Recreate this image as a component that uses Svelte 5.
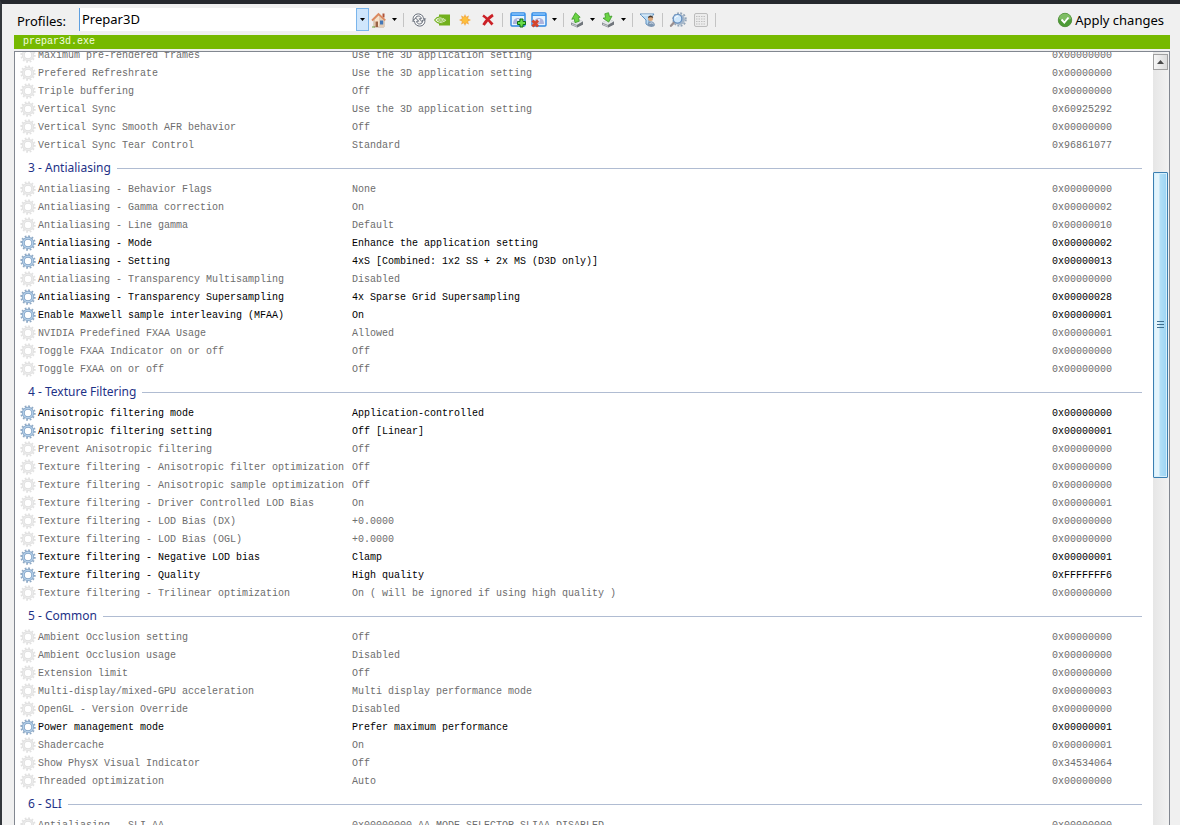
<script>
  const exe = 'prepar3d.exe';
  const APP = 'Use the 3D application setting';

  // [name, value, hex, changed]
  const groups = [
    {
      title: '',
      rows: [
        ['Maximum pre-rendered frames', APP, '0x00000000'],
        ['Prefered Refreshrate', APP, '0x00000000'],
        ['Triple buffering', 'Off', '0x00000000'],
        ['Vertical Sync', APP, '0x60925292'],
        ['Vertical Sync Smooth AFR behavior', 'Off', '0x00000000'],
        ['Vertical Sync Tear Control', 'Standard', '0x96861077']
      ]
    },
    {
      title: '3 - Antialiasing',
      rows: [
        ['Antialiasing - Behavior Flags', 'None', '0x00000000'],
        ['Antialiasing - Gamma correction', 'On', '0x00000002'],
        ['Antialiasing - Line gamma', 'Default', '0x00000010'],
        ['Antialiasing - Mode', 'Enhance the application setting', '0x00000002', true],
        ['Antialiasing - Setting', '4xS [Combined: 1x2 SS + 2x MS (D3D only)]', '0x00000013', true],
        ['Antialiasing - Transparency Multisampling', 'Disabled', '0x00000000'],
        ['Antialiasing - Transparency Supersampling', '4x Sparse Grid Supersampling', '0x00000028', true],
        ['Enable Maxwell sample interleaving (MFAA)', 'On', '0x00000001', true],
        ['NVIDIA Predefined FXAA Usage', 'Allowed', '0x00000001'],
        ['Toggle FXAA Indicator on or off', 'Off', '0x00000000'],
        ['Toggle FXAA on or off', 'Off', '0x00000000']
      ]
    },
    {
      title: '4 - Texture Filtering',
      rows: [
        ['Anisotropic filtering mode', 'Application-controlled', '0x00000000', true],
        ['Anisotropic filtering setting', 'Off [Linear]', '0x00000001', true],
        ['Prevent Anisotropic filtering', 'Off', '0x00000000'],
        ['Texture filtering - Anisotropic filter optimization', 'Off', '0x00000000'],
        ['Texture filtering - Anisotropic sample optimization', 'Off', '0x00000000'],
        ['Texture filtering - Driver Controlled LOD Bias', 'On', '0x00000001'],
        ['Texture filtering - LOD Bias (DX)', '+0.0000', '0x00000000'],
        ['Texture filtering - LOD Bias (OGL)', '+0.0000', '0x00000000'],
        ['Texture filtering - Negative LOD bias', 'Clamp', '0x00000001', true],
        ['Texture filtering - Quality', 'High quality', '0xFFFFFFF6', true],
        ['Texture filtering - Trilinear optimization', 'On ( will be ignored if using high quality )', '0x00000000']
      ]
    },
    {
      title: '5 - Common',
      rows: [
        ['Ambient Occlusion setting', 'Off', '0x00000000'],
        ['Ambient Occlusion usage', 'Disabled', '0x00000000'],
        ['Extension limit', 'Off', '0x00000000'],
        ['Multi-display/mixed-GPU acceleration', 'Multi display performance mode', '0x00000003'],
        ['OpenGL - Version Override', 'Disabled', '0x00000000'],
        ['Power management mode', 'Prefer maximum performance', '0x00000001', true],
        ['Shadercache', 'On', '0x00000001'],
        ['Show PhysX Visual Indicator', 'Off', '0x34534064'],
        ['Threaded optimization', 'Auto', '0x00000000']
      ]
    },
    {
      title: '6 - SLI',
      rows: [['Antialiasing - SLI AA', '0x00000000 AA_MODE_SELECTOR_SLIAA_DISABLED', '0x00000000']]
    }
  ];
</script>

{#snippet caret()}
  <svg width="5" height="3" viewBox="0 0 5 3" aria-hidden="true"><path d="M0 0h5L2.5 3z" fill="#000" /></svg>
{/snippet}

{#snippet gear(on)}
  <svg class="gear" width="16" height="16" viewBox="0 0 16 16" aria-hidden="true">
    <circle cx="8" cy="8" r="6.8" fill="none" stroke={on ? '#8fa9c4' : '#e2e2e2'} stroke-width="1.8" stroke-dasharray="1.8 1.76" />
    <circle cx="8" cy="8" r="4.7" fill="none" stroke={on ? '#7d9fc3' : '#dedede'} stroke-width="2.9" />
    <circle cx="8" cy="8" r="4.7" fill="none" stroke={on ? '#b4cfe8' : '#ebebeb'} stroke-width="1.5" />
  </svg>
{/snippet}

{#snippet profileWindow()}
  <rect x="1" y="1" width="14" height="13" rx="1" fill="#e6f3ff" stroke="#2f86e0" stroke-width="1.4" />
  <path d="M1 1h14v3H1z" fill="#3c96ee" />
  <path d="M2 2h12" stroke="#a9d5ff" stroke-width="1" />
  <path d="M3 12c0-4 2-6 5-6s5 2 5 6z" fill="#aeb3dc" />
  <path d="M7 7l2 0-1 5z" fill="#eef0fb" />
{/snippet}

{#snippet tray()}
  <path d="M2 10.5L9 7l5 2.500v3L8 15.500l-6-2.500z" fill="#8d9298" />
  <path d="M2 10.500L9 7l5 2.500L8 13z" fill="#e3e6e8" />
  <path d="M3 12.300l5 2" stroke="#c6cace" />
  <path d="M8 13v2.500l6-3v-3z" fill="#70757b" />
{/snippet}

<main class="window">
  <header class="toolbar">
    <label for="profile">Profiles:</label>
    <div class="combo">
      <select id="profile"><option>Prepar3D</option></select>
      <span class="drop">{@render caret()}</span>
    </div>

    <button class="split" aria-label="Home">
      <svg width="16" height="16" viewBox="0 0 16 16">
        <path d="M11.500 1.500h2v4h-2z" fill="#b0543a" />
        <path d="M3 7.500l4.500-4.500L13 7.500V15H3z" fill="#f8e3cb" stroke="#b99b7c" stroke-width=".8" />
        <path d="M8 4l5 3.500V15H8z" fill="#e2cdb8" />
        <path d="M1 8.500L7.500 2l6.800 6.300" fill="none" stroke="#dc8a60" stroke-width="1.800" />
        <path d="M4.500 9.500h2.500V15H4.500z" fill="#9a6244" />
        <path d="M9 8.500h3.200v4H9z" fill="#4478b8" />
        <path d="M1 15h3" stroke="#6ea544" />
      </svg>
    </button>
    <button class="arrow" aria-label="Home options">{@render caret()}</button>
    <i class="sep"></i>

    <button aria-label="Refresh">
      <svg width="16" height="16" viewBox="0 0 16 16" fill="none" stroke-linejoin="round">
        <g fill="#fff" stroke="#626975" stroke-width="1">
          <path d="M2.200 8C1.500 4 5 1 9 2.200c2.400.7 3.500 2.700 3.400 4.600h2.100L11.400 10 8.300 6.800h2C10.300 5 9 4 7.500 4 5.500 4 4 5.500 4.300 8z" />
          <path d="M13.800 8c.7 4-2.800 7-6.800 5.800C4.600 13.100 3.500 11.100 3.600 9.200H1.500L4.600 6l3.100 3.200h-2C5.700 11 7 12 8.500 12c2 0 3.500-1.500 3.200-4z" />
        </g>
      </svg>
    </button>
    <button aria-label="NVIDIA settings">
      <svg width="16" height="12" viewBox="0 0 16 12">
        <path d="M5 .5h11v11H5z" fill="#72b01d" />
        <path d="M.6 6C3 2.500 8 1.200 13 6 9.500 10.300 4 10.700.6 6z" fill="#f4f9ea" stroke="#72b01d" stroke-width="1.100" />
        <path d="M3 6c2-2.700 5-2.700 8 0-2.300 2.700-5.700 2.900-8 0z" fill="#72b01d" />
        <path d="M4.500 6c1.300-1.500 3.300-1.500 5 0-1.500 1.600-3.500 1.600-5 0z" fill="none" stroke="#f4f9ea" stroke-width=".9" />
      </svg>
    </button>
    <button aria-label="Create profile">
      <svg width="14" height="14" viewBox="0 0 14 14">
        <path d="M7 1l1.200 2.700L11 2.500 10 5.500l3 1.500-3 1.500 1 3-2.800-1.200L7 13l-1.200-2.700L3 11.500l1-3L1 7l3-1.500-1-3 2.800 1.200z" fill="#f3ac45" />
        <circle cx="7" cy="7" r="2.900" fill="#fdbf3c" />
      </svg>
    </button>
    <button aria-label="Delete profile">
      <svg width="14" height="14" viewBox="0 0 14 14">
        <path d="M2 2.500c3 2 6.500 5.500 9.500 9M12 2C8 4.500 4.500 8.500 2.500 12" fill="none" stroke="#cb2026" stroke-width="2.700" />
      </svg>
    </button>
    <i class="sep"></i>

    <button aria-label="Add application to profile">
      <svg width="16" height="16" viewBox="0 0 16 16">
        {@render profileWindow()}
        <path d="M10 7h3v2.500h2.500v3H13V15h-3v-2.500H7.500v-3H10z" fill="#69dc48" stroke="#0c6b14" stroke-width="1" />
      </svg>
    </button>
    <button class="split" aria-label="Remove application from profile">
      <svg width="16" height="16" viewBox="0 0 16 16">
        {@render profileWindow()}
        <path d="M1.500 8.500l5.500 6M7 8.500l-5.500 6" stroke="#d5452c" stroke-width="2.800" />
      </svg>
    </button>
    <button class="arrow" aria-label="Remove options">{@render caret()}</button>
    <i class="sep"></i>

    <button class="split" aria-label="Export profiles">
      <svg width="16" height="16" viewBox="0 0 16 16">
        {@render tray()}
        <path d="M6.500 .8l4.700 4.500-1.800.2.900 3.700L6 10.700l-.8-4-2.400.6z" fill="#6bd344" stroke="#3c9a27" stroke-width=".8" />
      </svg>
    </button>
    <button class="arrow" aria-label="Export options">{@render caret()}</button>
    <button class="split" aria-label="Import profiles">
      <svg width="16" height="16" viewBox="0 0 16 16">
        {@render tray()}
        <path d="M4.800 1.800L8.500 .7l1 3.800 2.500-.4-3.300 6L3 6.200l2.600-.5z" fill="#6bd344" stroke="#3c9a27" stroke-width=".8" />
      </svg>
    </button>
    <button class="arrow" aria-label="Import options">{@render caret()}</button>
    <i class="sep"></i>

    <button aria-label="Filter customized settings">
      <svg width="17" height="16" viewBox="0 0 17 16">
        <path d="M1 2h14l-5 6v6l-3-2V8z" fill="#b9daf4" stroke="#5f8fbe" />
        <path d="M2.500 3h11" stroke="#eef8ff" />
        <circle cx="11.500" cy="6.500" r="2.500" fill="#d9a679" />
        <path d="M9 6c0-3.500 5.200-3.500 5.200 0-1.500-1-3.400-1-5.200 0z" fill="#46382f" />
        <path d="M8.500 13c0-5 6.500-5 7.500 0-1 2.500-6 2.500-7.500 0z" fill="#7f97b2" />
        <path d="M10.500 12c1-1.500 2.500-1.500 4 0" stroke="#dce6f1" fill="none" />
      </svg>
    </button>
    <i class="sep"></i>

    <button aria-label="Show unknown settings">
      <svg width="18" height="17" viewBox="0 0 18 17">
        <circle cx="10.500" cy="8.500" r="6.300" fill="none" stroke="#93a5b8" stroke-width="1.900" stroke-dasharray="1.900 1.400" />
        <circle cx="10.500" cy="8.500" r="5.400" fill="#a3b6ca" />
        <path d="M5 11.500L2 14.800" stroke="#9a8f90" stroke-width="2.300" stroke-linecap="round" />
        <circle cx="8.500" cy="7.800" r="4.300" fill="#cfe7fb" stroke="#6790c0" stroke-width="1.200" />
        <path d="M6 7.300c.5-1.600 1.800-2.300 3.200-2.100" stroke="#fff" fill="none" />
      </svg>
    </button>
    <button aria-label="Edit value" disabled>
      <svg width="16" height="16" viewBox="0 0 16 16">
        <rect x="1.500" y="1.500" width="13" height="13" rx="1.500" fill="#ececec" stroke="#bcbcbc" />
        <path d="M3 4.500h10M3 7h10M3 9.500h10M3 12h10" stroke="#c0c0c0" stroke-width="1.200" stroke-dasharray="1.500 1" />
      </svg>
    </button>
    <i class="sep"></i>

    <button class="apply">
      <svg width="16" height="16" viewBox="0 0 16 16" aria-hidden="true">
        <circle cx="8" cy="8" r="6.700" fill="#4d9b36" stroke="#55923f" />
        <path d="M2 7a6 5.500 0 0 1 12 0c-3 1.500-8 2-12 0z" fill="#7fbd64" />
        <path d="M4.500 7.500l2.800 3L11.500 5.500" fill="none" stroke="#fff" stroke-width="1.900" />
      </svg>
      Apply changes
    </button>
  </header>

  <p class="exe">{exe}</p>

  <section class="list">
    <div class="view">
      <table>
        <colgroup><col class="c-name" /><col /><col class="c-hex" /></colgroup>
        {#each groups as group}
          <tbody>
            {#if group.title}
              <tr><th colspan="3"><div class="group">{group.title}</div></th></tr>
            {/if}
            {#each group.rows as [name, value, hex, changed]}
              <tr class:changed>
                <td><div class="name">{@render gear(changed)}{name}</div></td>
                <td>{value}</td>
                <td>{hex}</td>
              </tr>
            {/each}
          </tbody>
        {/each}
      </table>
    </div>
    <div class="scroll">
      <button class="up" aria-label="Scroll up">
        <svg width="7" height="4" viewBox="0 0 7 4"><path d="M3.500 0L7 4H0z" fill="#4a4a4a" /></svg>
      </button>
      <div class="before"></div>
      <div class="thumb"><i></i><i></i><i></i></div>
      <div class="after"></div>
    </div>
  </section>
</main>

<style>
  :global(body) {
    margin: 0;
    background: #f0f0f0;
  }
  .window {
    box-sizing: border-box;
    height: 100vh;
    overflow: hidden;
    display: flex;
    flex-direction: column;
    padding: 0 10px 0 12px;
    border-top: 4px solid #26292e;
    border-left: 2px solid #33373c;
    background: #f0f0f0;
    font: 13px/18px "Noto Sans", "Open Sans", sans-serif;
    color: #000;
  }
  .toolbar {
    display: flex;
    align-items: center;
    flex: none;
    height: 31px;
  }
  .toolbar label {
    width: 62px;
    padding: 3px 0 0 3px;
    flex: none;
    box-sizing: border-box;
  }
  .combo {
    display: flex;
    flex: 0 1 290px;
    min-width: 120px;
    height: 23px;
    margin-left: 3px;
  }
  select {
    appearance: none;
    flex: 1;
    min-width: 0;
    padding: 0 0 2px 2px;
    border: 0;
    border-left: 1px solid #5e9fe0;
    border-radius: 0;
    background: #fff;
    color: #000;
    font: inherit;
  }
  .drop {
    display: grid;
    place-items: center;
    box-sizing: border-box;
    width: 13px;
    border: 1px solid #7ab5ec;
    background: #cfe6fc;
  }
  button {
    display: grid;
    place-items: center;
    flex: none;
    width: 23px;
    height: 23px;
    padding: 0;
    border: 0;
    background: none;
    color: #000;
    font: inherit;
  }
  button.split {
    width: 20px;
  }
  button.arrow {
    width: 11px;
  }
  .sep {
    flex: none;
    width: 1px;
    height: 14px;
    margin: 0 3px;
    background: #c4c4c4;
  }
  button.apply {
    display: flex;
    align-items: center;
    gap: 2px;
    width: auto;
    margin-left: auto;
    padding-right: 6px;
  }
  .exe {
    flex: none;
    margin: 0;
    padding-left: 9px;
    background: #76b900;
    color: #f4ffe0;
    font: 10px/14px "Liberation Mono", monospace;
  }
  .list {
    display: flex;
    flex: 1;
    min-height: 0;
    margin-top: 2px;
    border: 1px solid #828790;
    border-bottom: 0;
    background: #fff;
  }
  .view {
    flex: 1;
    min-width: 0;
    overflow: hidden;
    padding-left: 5px;
  }
  table {
    width: 100%;
    margin-top: -5px;
    table-layout: fixed;
    border-collapse: collapse;
    font: 10px/18px "Liberation Mono", monospace;
    color: #6d6d6d;
    white-space: nowrap;
  }
  .c-name {
    width: 332px;
  }
  .c-hex {
    width: 101px;
  }
  td {
    height: 18px;
    padding: 0;
  }
  .changed {
    color: #000;
  }
  .name {
    display: flex;
    align-items: center;
    gap: 2px;
  }
  .gear {
    flex: none;
    margin-bottom: 2px;
  }
  th {
    height: 26px;
    padding: 0 11px 0 8px;
    font: 12px/18px "Noto Sans", "Open Sans", sans-serif;
    color: #1e3287;
    text-align: left;
  }
  .group {
    display: flex;
    align-items: center;
    gap: 6px;
  }
  .group::after {
    content: "";
    flex: 1;
    height: 1px;
    background: #b0bcd2;
  }
  .scroll {
    display: flex;
    flex-direction: column;
    flex: none;
    width: 15px;
    padding: 2px 1px 0 0;
    background: linear-gradient(90deg, #e6e6e6, #f2f2f2);
  }
  .up {
    width: 15px;
    height: 16px;
    box-sizing: border-box;
    border: 1px solid #a0a0a0;
    background: linear-gradient(90deg, #f6f6f6, #dcdcdc);
  }
  .before {
    flex: 102;
  }
  .thumb {
    display: flex;
    flex: 305;
    flex-direction: column;
    align-items: center;
    justify-content: center;
    gap: 2px;
    box-sizing: border-box;
    border: 1px solid #3c7fb1;
    border-radius: 1px;
    background: linear-gradient(90deg, #e3f4fc 0 35%, #b0def7 50%, #9bd3f3);
    box-shadow: inset 0 0 0 1px #d5effc;
  }
  .thumb i {
    width: 7px;
    height: 1px;
    background: #3f6f90;
  }
  .after {
    flex: 348;
  }
</style>
